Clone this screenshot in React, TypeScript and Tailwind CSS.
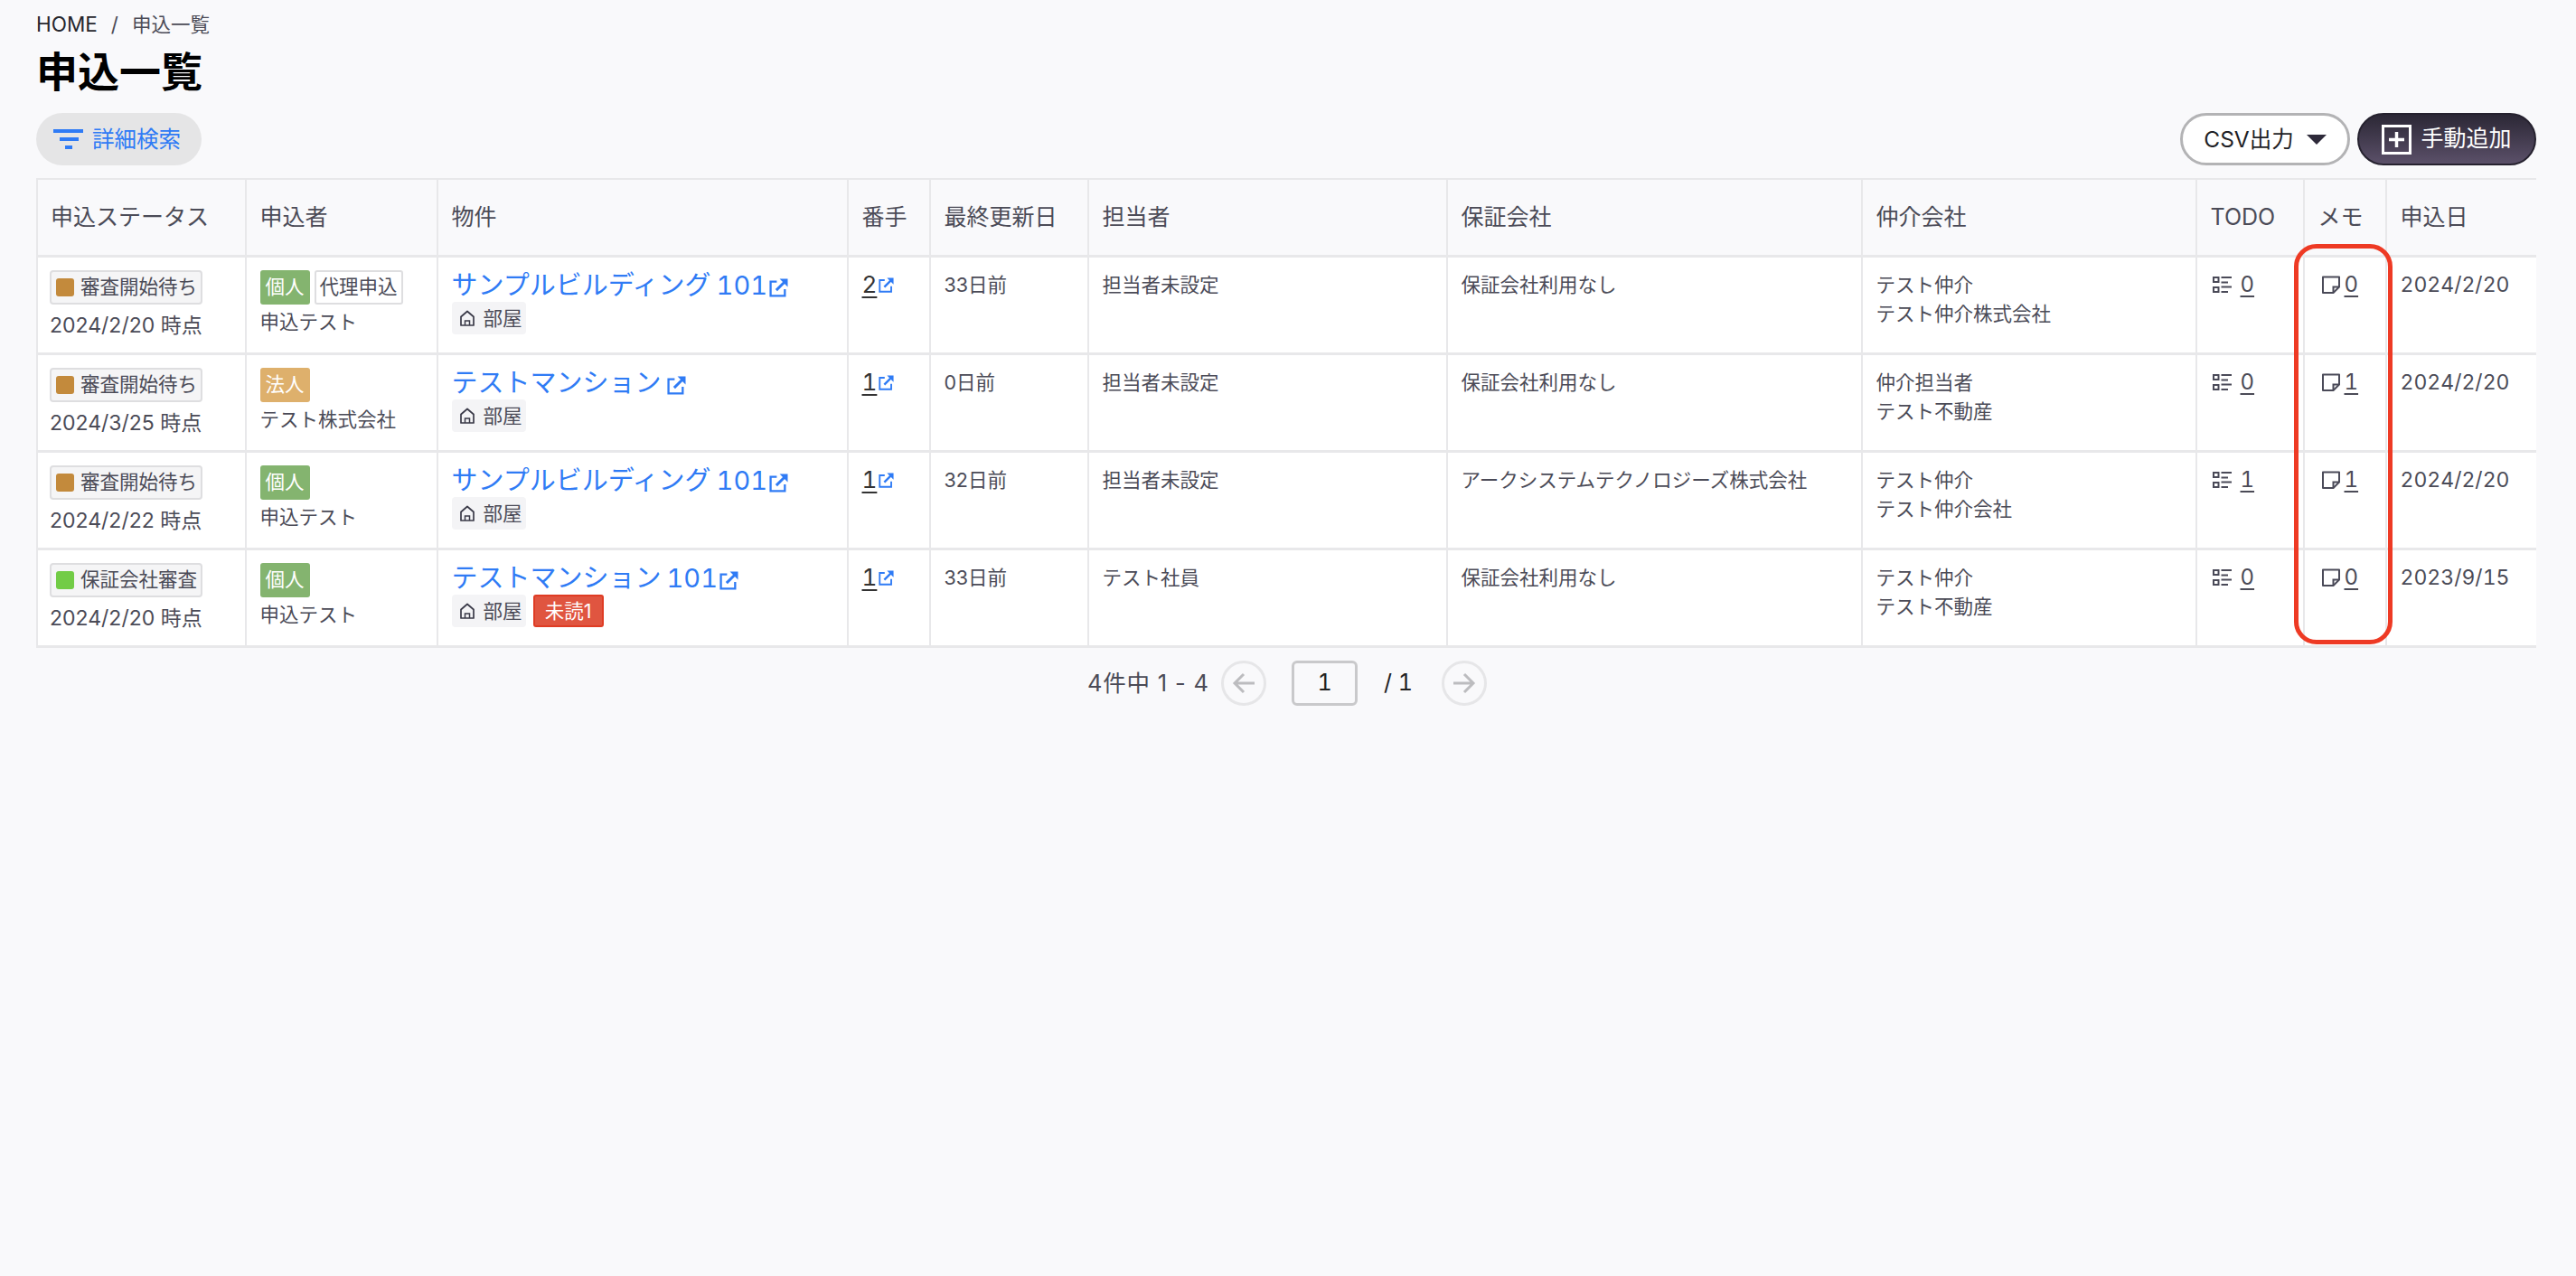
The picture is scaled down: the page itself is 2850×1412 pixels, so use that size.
import React from "react";

const font = { fontFamily: '"Inter","Noto Sans CJK JP","Noto Sans",sans-serif' };

function Ext({ size = 21 }: { size?: number }) {
  return (
    <svg width={size} height={size} viewBox="0 0 20 20" fill="none" className="inline-block shrink-0" stroke="#2f7bf5" strokeWidth="2.2">
      <path d="M8 3.5H1.5V18.5H16.5V11.5" />
      <path d="M7.5 12.5L16 4" strokeWidth="2.8" />
      <path d="M11 0.5H19.5V9Z" fill="#2f7bf5" stroke="none" />
    </svg>
  );
}

function House() {
  return (
    <svg width="20" height="20" viewBox="0 0 20 20" fill="none" stroke="#3a3a48" strokeWidth="1.7" className="shrink-0">
      <path d="M3 18V8.5L10 2.5L17 8.5V18H3Z" strokeLinejoin="round" />
      <path d="M7.5 18V13H12.5V18" strokeWidth="1.5" />
    </svg>
  );
}

function TodoIcon() {
  return (
    <svg width="21" height="20" viewBox="0 0 21 20" fill="none" stroke="#4a4a58" strokeWidth="2" className="mt-[2px] shrink-0">
      <rect x="1" y="2" width="5.5" height="5" />
      <rect x="1" y="13" width="5.5" height="5" />
      <path d="M9.5 2H21M9.5 7.5H17M9.5 12.5H21M9.5 18H17" />
    </svg>
  );
}

function MemoIcon() {
  return (
    <svg width="20" height="20" viewBox="0 0 20 20" fill="none" stroke="#4a4a58" strokeWidth="2" className="mt-[2px] shrink-0">
      <path d="M1 1.5H19V12.5L12.5 19H1V1.5Z" strokeLinejoin="round" />
      <path d="M12.5 19V12.5H19" />
    </svg>
  );
}

type Row = {
  status: string;
  sw: string;
  date: string;
  type: string;
  typeBg: string;
  proxy?: boolean;
  name: string;
  prop: string;
  room?: string;
  gap?: boolean;
  unread?: boolean;
  no: string;
  upd: string;
  staff: string;
  guar: string;
  ag1: string;
  ag2: string;
  todo: string;
  memo: string;
  day: string;
};

const rows: Row[] = [
  { status: "審査開始待ち", sw: "bg-[#c38a3c]", date: "2024/2/20 時点", type: "個人", typeBg: "bg-[#84b46f]", proxy: true, name: "申込テスト", prop: "サンプルビルディング", room: "101", no: "2", upd: "33日前", staff: "担当者未設定", guar: "保証会社利用なし", ag1: "テスト仲介", ag2: "テスト仲介株式会社", todo: "0", memo: "0", day: "2024/2/20" },
  { status: "審査開始待ち", sw: "bg-[#c38a3c]", date: "2024/3/25 時点", type: "法人", typeBg: "bg-[#deb06c]", name: "テスト株式会社", prop: "テストマンション", gap: true, no: "1", upd: "0日前", staff: "担当者未設定", guar: "保証会社利用なし", ag1: "仲介担当者", ag2: "テスト不動産", todo: "0", memo: "1", day: "2024/2/20" },
  { status: "審査開始待ち", sw: "bg-[#c38a3c]", date: "2024/2/22 時点", type: "個人", typeBg: "bg-[#84b46f]", name: "申込テスト", prop: "サンプルビルディング", room: "101", no: "1", upd: "32日前", staff: "担当者未設定", guar: "アークシステムテクノロジーズ株式会社", ag1: "テスト仲介", ag2: "テスト仲介会社", todo: "1", memo: "1", day: "2024/2/20" },
  { status: "保証会社審査", sw: "bg-[#72cc46]", date: "2024/2/20 時点", type: "個人", typeBg: "bg-[#84b46f]", name: "申込テスト", prop: "テストマンション", room: "101", unread: true, no: "1", upd: "33日前", staff: "テスト社員", guar: "保証会社利用なし", ag1: "テスト仲介", ag2: "テスト不動産", todo: "0", memo: "0", day: "2023/9/15" },
];

const heads = ["申込ステータス", "申込者", "物件", "番手", "最終更新日", "担当者", "保証会社", "仲介会社", "TODO", "メモ", "申込日"];
const widths = ["w-[230.5px]", "w-[212px]", "w-[454px]", "w-[91px]", "w-[175px]", "w-[397px]", "w-[459px]", "w-[370px]", "w-[119px]", "w-[91px]", "w-[167.5px]"];

const base = "h-[108px] border-l-2 border-b-[3px] border-[#e8e8ea] bg-white align-top pt-[14px] text-[22px] leading-[32px] text-[#4b4b57]";
const td = base + " pl-[15px]";
const tdFirst = base + " pl-[13px]";

export default function App() {
  return (
    <div style={font} className="relative h-[1412px] w-[2850px] overflow-hidden bg-[#f9f9fb] text-[#222]">
      <div className="ml-10 w-[2766px]">
        <div className="flex h-[54px] items-center text-[22.5px] text-[#26262c]">
          <span>HOME</span>
          <span className="mx-[15px] text-[#4b4b57]">/</span>
          <span className="text-[21.5px] text-[#4b4b57]">申込一覧</span>
        </div>
        <h1 className="m-0 h-[71px] text-[46px] font-bold leading-[50px] text-black">申込一覧</h1>
        <div className="flex h-[58px] items-center justify-between">
          <button className="flex h-[58px] w-[183px] items-center gap-[10px] rounded-full bg-[#e5e5e6] pl-[19px] text-[24.5px] text-[#2f7bf5]">
            <svg width="33" height="22" viewBox="0 0 33 22" fill="#2f7bf5" className="shrink-0">
              <rect x="0" y="0" width="33" height="4" />
              <rect x="7" y="9" width="21" height="4" />
              <rect x="13" y="18" width="8" height="4" />
            </svg>
            <span>詳細検索</span>
          </button>
          <div className="flex gap-2">
            <button className="flex h-[58px] w-[188px] items-center justify-center gap-[14px] rounded-full border-[3px] border-[#b3b3b5] bg-white text-[24.5px] text-[#1f1f26]">
              <span>CSV出力</span>
              <span className="h-0 w-0 border-x-[11px] border-t-[11px] border-x-transparent border-t-[#2e2a3a]" />
            </button>
            <button className="flex h-[58px] w-[198px] items-center justify-center gap-[10px] rounded-full border-2 border-[#26222f] bg-linear-to-b from-[#2c2836] to-[#5b5069] text-[25px] text-white">
              <svg width="33" height="33" viewBox="0 0 33 33" fill="none" stroke="#fff" className="shrink-0">
                <rect x="1.5" y="1.5" width="30" height="30" strokeWidth="3" />
                <path d="M16.5 8V25M8 16.5H25" strokeWidth="3.5" />
              </svg>
              <span>手動追加</span>
            </button>
          </div>
        </div>
        <table className="mt-[14px] w-[2766px] table-fixed border-separate border-spacing-0">
          <colgroup>
            {widths.map((w, i) => (
              <col key={i} className={w} />
            ))}
          </colgroup>
          <thead>
            <tr>
              {heads.map((h, i) => (
                <th key={h} className={`h-[88px] border-t-2 border-b-[3px] border-l-2 border-[#e8e8ea] bg-[#f9f9fb] text-left align-middle text-[25px] font-normal text-[#4b4b57] ${i === 0 ? "pl-[14px]" : "pl-[15px]"}`}>
                  {h}
                </th>
              ))}
            </tr>
          </thead>
          <tbody>
            {rows.map((r, i) => (
              <tr key={i}>
                <td className={tdFirst}>
                  <div className="flex h-[38px] w-[169px] items-center gap-[7px] rounded-[4px] border-2 border-[#dedee0] bg-[#f5f5f6] pb-[2px] pl-[5px] text-[21.5px]">
                    <span className={`mt-[2px] h-5 w-5 rounded-[3px] ${r.sw}`} />
                    <span className="whitespace-nowrap">{r.status}</span>
                  </div>
                  <div className="mt-[7px] text-[23px] leading-[32px]">{r.date}</div>
                </td>
                <td className={td}>
                  <div className="flex gap-[5px]">
                    <span className={`flex h-[38px] w-[55px] items-center justify-center rounded-[3px] pb-[2px] text-[21.5px] text-white ${r.typeBg}`}>{r.type}</span>
                    {r.proxy && <span className="flex h-[38px] w-[98px] items-center justify-center rounded-[3px] border-2 border-[#dedee0] bg-white pb-[2px] text-[21.5px]">代理申込</span>}
                  </div>
                  <div className="mt-[3px] text-[21.5px]">{r.name}</div>
                </td>
                <td className={td}>
                  <div className="-mt-[1px] flex h-[36px] items-center text-[29px] leading-[36px] text-[#2f7bf5]">
                    <span className="whitespace-nowrap">{r.prop}</span>
                    {r.room && <span className="ml-[6px] whitespace-nowrap tabular-nums">{r.room}</span>}
                    <span className={r.gap ? "ml-[6px]" : "ml-[2px]"}>
                      <Ext />
                    </span>
                  </div>
                  <div className="mt-[0px] flex gap-[8px]">
                    <span className="flex h-[36px] w-[82px] items-center gap-2 rounded-[4px] bg-[#f4f4f6] pl-[7px] text-[21.5px]">
                      <House />
                      <span>部屋</span>
                    </span>
                    {r.unread && <span className="flex h-[36px] w-[78px] items-center justify-center rounded-[3px] border-2 border-[#df3c24] bg-[#e05540] text-[21.5px] text-white">未読1</span>}
                  </div>
                </td>
                <td className={td}>
                  <div className="flex items-start">
                    <span className="text-[26px] leading-[32px] text-[#333] tabular-nums underline underline-offset-[4px]">{r.no}</span>
                    <span className="ml-[2px] -mt-[2px]">
                      <Ext size={17} />
                    </span>
                  </div>
                </td>
                <td className={td}><div className="text-[21.5px]">{r.upd}</div></td>
                <td className={td}><div className="text-[21.5px]">{r.staff}</div></td>
                <td className={td}><div className="whitespace-nowrap text-[21.5px]">{r.guar}</div></td>
                <td className={td}>
                  <div className="text-[21.5px] leading-[32px]">{r.ag1}</div>
                  <div className="text-[21.5px] leading-[32px]">{r.ag2}</div>
                </td>
                <td className={td}>
                  <div className="flex items-start gap-[10px] pl-[2px] pt-[4px]">
                    <TodoIcon />
                    <span className="text-[24px] leading-[24px] tabular-nums underline underline-offset-[4px]">{r.todo}</span>
                  </div>
                </td>
                <td className={td}>
                  <div className="flex items-start gap-[5px] pl-[4px] pt-[4px]">
                    <MemoIcon />
                    <span className="text-[24px] leading-[24px] tabular-nums underline underline-offset-[4px]">{r.memo}</span>
                  </div>
                </td>
                <td className={td}><div className="pt-[1px] text-[23px] leading-[30px] tabular-nums">{r.day}</div></td>
              </tr>
            ))}
          </tbody>
        </table>
        <div className="mt-[14px] flex h-[50px] w-[2766px] items-center">
          <span className="ml-[1163px] w-[148px] whitespace-nowrap text-[25.5px] tracking-[0.8px] text-[#4b4b57]">4件中 1 - 4</span>
          <button className="flex h-[50px] w-[50px] items-center justify-center rounded-full border-[3px] border-[#e6e6e8]">
            <svg width="26" height="26" viewBox="0 0 26 26" fill="none" stroke="#bcbcbf" strokeWidth="3"><path d="M25 13H3M13 3L3 13L13 23" /></svg>
          </button>
          <div className="ml-[28px] flex h-[50px] w-[73px] items-center justify-center rounded-[6px] border-[3px] border-[#c9c9cb] text-[25px] text-[#222] tabular-nums">1</div>
          <span className="ml-[29px] w-[64px] whitespace-nowrap text-[25px] text-[#222] tabular-nums">/ 1</span>
          <button className="flex h-[50px] w-[50px] items-center justify-center rounded-full border-[3px] border-[#e6e6e8]">
            <svg width="26" height="26" viewBox="0 0 26 26" fill="none" stroke="#bcbcbf" strokeWidth="3"><path d="M1 13H23M13 3L23 13L13 23" /></svg>
          </button>
        </div>
      </div>
      <div className="absolute left-[2538px] top-[270px] h-[443px] w-[109px] rounded-[25px] border-[5px] border-[#ee3a24]" />
    </div>
  );
}
